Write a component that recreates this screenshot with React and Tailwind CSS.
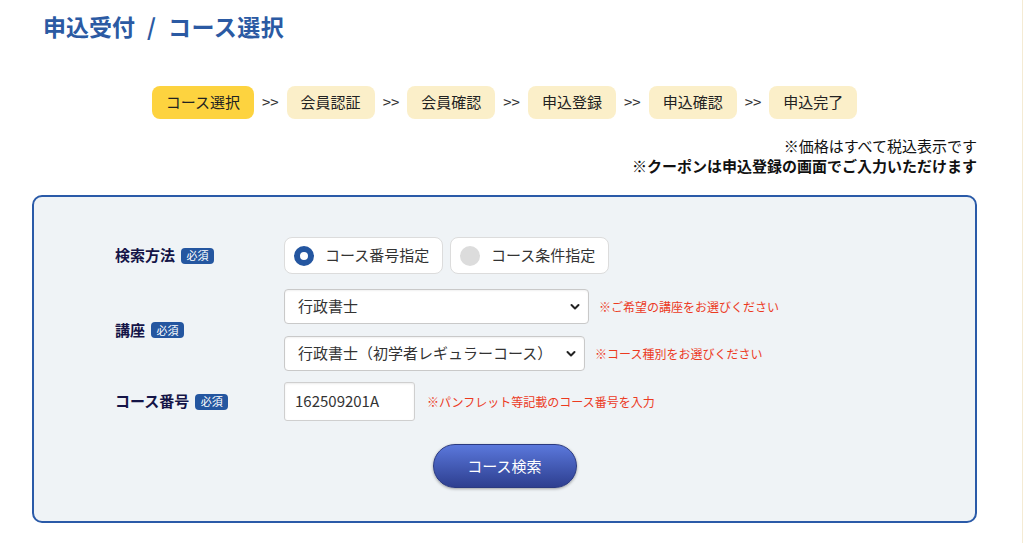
import React from "react";

const font = { fontFamily: '"Noto Sans CJK JP", "Noto Sans", sans-serif' };

function Badge() {
  return (
    <span className="ml-[6px] inline-flex h-[16px] w-[33px] items-center justify-center rounded-[4px] bg-[#2456a0] text-[11px] font-normal leading-none text-white">
      必須
    </span>
  );
}

function Chevron() {
  return (
    <svg className="pointer-events-none absolute right-[4px] top-1/2 -translate-y-1/2" width="10" height="7" viewBox="0 0 10 7">
      <path d="M1.5 1.5 L5 5 L8.5 1.5" fill="none" stroke="#222" strokeWidth="2" strokeLinecap="round" strokeLinejoin="round" />
    </svg>
  );
}

function Select({ value, width }) {
  return (
    <div className="relative h-[35px] rounded-[4px] border border-[#c9c9c9] bg-white shadow-[inset_0_1px_2px_rgba(0,0,0,0.06)]" style={{ width }}>
      <div className="flex h-full items-center pl-[13px] text-[15px] text-[#333]">{value}</div>
      <div className="absolute right-[4px] top-0 h-full w-[10px]">
        <Chevron />
      </div>
    </div>
  );
}

const steps = ["会員認証", "会員確認", "申込登録", "申込確認", "申込完了"];

export default function App() {
  return (
    <div className="min-h-[543px] w-[1023px] border-r border-[#f5ebd3] bg-white text-[#222]" style={font}>
      <div className="w-[1022px]">
        <h1 className="flex items-center pl-[43px] pt-[9px] text-[23px] font-bold leading-[34px] text-[#2b5aa3]">
          <span>申込受付</span>
          <span className="mx-[12px]">/</span>
          <span className="tracking-[0.5px]">コース選択</span>
        </h1>
        <div className="ml-[32px] w-[945px]">
          <div className="mt-[43px] flex items-center justify-center">
            <div className="flex h-[33px] items-center rounded-[8px] bg-[#fdd33f] px-[14px] text-[15px] text-[#222]">コース選択</div>
            {steps.map((s) => (
              <React.Fragment key={s}>
                <span className="mx-[8px] text-[15px] text-[#333]">&gt;&gt;</span>
                <div className="flex h-[33px] items-center rounded-[8px] bg-[#fbefc9] px-[14px] text-[15px] text-[#222]">{s}</div>
              </React.Fragment>
            ))}
          </div>
          <div className="mt-[17px] text-right text-[15px] leading-[20px] text-[#111]">
            <p>※価格はすべて税込表示です</p>
            <p className="font-bold">※クーポンは申込登録の画面でご入力いただけます</p>
          </div>
          <div className="mt-[19px] rounded-[10px] border-2 border-[#2a5aa8] bg-[#eff3f6] pb-[33px] pl-[81px] pt-[40px]">
            <div className="grid grid-cols-[169px_1fr] items-center">
              <div className="flex items-center text-[15px] font-bold text-[#141447]">
                検索方法<Badge />
              </div>
              <div className="flex gap-[7px]">
                <div className="flex h-[37px] w-[159px] items-center rounded-[8px] border border-[#dcdcdc] bg-white pl-[9px]">
                  <span className="h-[20px] w-[20px] rounded-full border-[6px] border-[#2456a0] bg-white" />
                  <span className="ml-[11px] text-[15px] text-[#333]">コース番号指定</span>
                </div>
                <div className="flex h-[37px] w-[159px] items-center rounded-[8px] border border-[#dcdcdc] bg-white pl-[9px]">
                  <span className="h-[20px] w-[20px] rounded-full bg-[#dcdcdc]" />
                  <span className="ml-[11px] text-[15px] text-[#333]">コース条件指定</span>
                </div>
              </div>

              <div className="mt-[15px] flex items-center text-[15px] font-bold text-[#141447]">
                講座<Badge />
              </div>
              <div className="mt-[15px] flex flex-col gap-[12px]">
                <div className="flex items-center">
                  <Select value="行政書士" width={305} />
                  <span className="ml-[10px] text-[12px] text-[#ec3a1f]">※ご希望の講座をお選びください</span>
                </div>
                <div className="flex items-center">
                  <Select value="行政書士（初学者レギュラーコース）" width={301} />
                  <span className="ml-[10px] text-[12px] text-[#ec3a1f]">※コース種別をお選びください</span>
                </div>
              </div>

              <div className="mt-[11px] flex items-center text-[15px] font-bold text-[#141447]">
                コース番号<Badge />
              </div>
              <div className="mt-[11px] flex items-center">
                <div className="flex h-[39px] w-[131px] items-center rounded-[3px] border border-[#cfcfcf] bg-white pl-[10px] text-[15px] text-[#333] shadow-[inset_0_1px_2px_rgba(0,0,0,0.08)]">
                  162509201A
                </div>
                <span className="ml-[12px] text-[12px] text-[#ec3a1f]">※パンフレット等記載のコース番号を入力</span>
              </div>
            </div>
            <div className="mt-[23px] flex justify-center pr-[81px]">
              <button className="flex h-[44px] w-[144px] items-center justify-center rounded-full border border-[#2b3a80] bg-gradient-to-b from-[#5b78dc] to-[#2e3f90] text-[15px] text-white shadow-[0_1px_3px_rgba(0,0,0,0.35)]">
                コース検索
              </button>
            </div>
          </div>
        </div>
      </div>
    </div>
  );
}
